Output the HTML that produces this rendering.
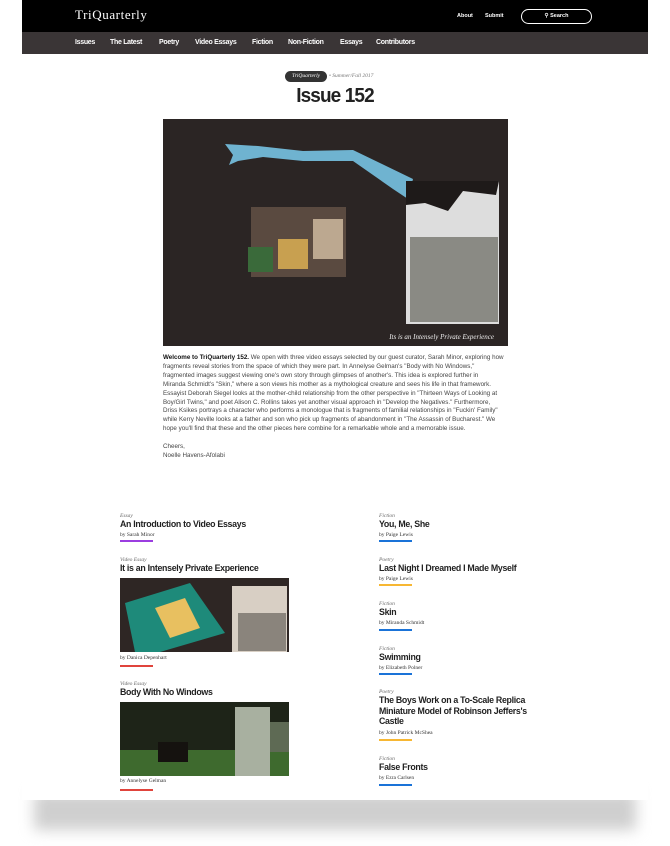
<!DOCTYPE html>
<html><head><meta charset="utf-8"><style>
*{margin:0;padding:0;box-sizing:border-box}
body{width:670px;height:846px;background:#fff;position:relative;overflow:hidden;font-family:"Liberation Sans",sans-serif}
.shadow{position:absolute;left:34px;top:792px;width:602px;height:38px;background:#cfcfcf;filter:blur(7px)}
.page{position:absolute;left:22px;top:0;width:626px;height:800px;background:#fff;overflow:hidden}
.top{position:absolute;left:0;top:0;width:626px;height:32px;background:#000}
.logo{position:absolute;left:53px;top:7px;color:#fff;font-family:"Liberation Serif",serif;font-size:13px;letter-spacing:.6px}
.tl{position:absolute;top:13px;color:#fff;font-size:5.5px;font-weight:bold}
.search{position:absolute;left:499px;top:9px;width:71px;height:15px;border:1px solid #fff;border-radius:8px;color:#fff;font-size:5.5px;font-weight:bold;text-align:center;line-height:13px}
.nav{position:absolute;left:0;top:32px;width:626px;height:22px;background:#3a3536}
.nav span{position:absolute;top:7px;color:#fff;font-size:7px;font-weight:bold;letter-spacing:-.3px}
.a{position:absolute;white-space:nowrap}
.cat{font-family:"Liberation Serif",serif;font-style:italic;font-size:5.5px;color:#666}
.tt{font-size:8.8px;font-weight:bold;color:#222;letter-spacing:-.3px;line-height:10.5px}
.by{font-family:"Liberation Serif",serif;font-size:5.5px;color:#333}
.bar{width:33px;height:2px}
p.body{position:absolute;left:141px;top:354px;width:360px;font-size:6.25px;line-height:8.9px;color:#444;white-space:nowrap}
p.body span{display:block;line-height:8.9px}
</style></head><body>
<div class="shadow"></div>
<div class="page">
<div class="top">
<div class="logo">TriQuarterly</div>
<div class="tl" style="left:435px">About</div>
<div class="tl" style="left:463px">Submit</div>
<div class="search">⚲ Search</div>
</div>
<div class="nav">
<span style="left:53px">Issues</span><span style="left:88px">The Latest</span><span style="left:137px">Poetry</span><span style="left:173px">Video Essays</span><span style="left:230px">Fiction</span><span style="left:266px">Non-Fiction</span><span style="left:318px">Essays</span><span style="left:354px">Contributors</span>
</div>
<div class="a" style="left:263px;top:71px;height:11px;width:42px;background:#333;border-radius:6px;color:#fff;font-family:'Liberation Serif',serif;font-style:italic;font-size:5.5px;text-align:center;line-height:11px">TriQuarterly</div>
<div class="a cat" style="left:307px;top:73px;color:#777">• Summer/Fall 2017</div>
<div class="a" style="left:0;width:626px;text-align:center;top:86px;font-size:19px;font-weight:bold;color:#222;letter-spacing:-.9px;transform:scaleY(1.05)">Issue 152</div>
<svg class="a" style="left:141px;top:119px" width="345" height="227" viewBox="0 0 345 227">
<rect width="345" height="227" fill="#2b2524"/>
<path d="M62 25 L95 27 L140 32 L190 31 L250 60 L245 80 L230 70 L190 42 L140 42 L100 38 L75 42 L66 46 L70 36Z" fill="#6fb3d0"/>
<rect x="243" y="62" width="93" height="143" fill="#ddd"/>
<path d="M243 62 L336 62 L333 76 L300 72 L285 92 L262 84 L243 86Z" fill="#1e1a19"/>
<rect x="247" y="118" width="88" height="85" fill="#8a8a84"/>
<rect x="88" y="88" width="95" height="70" fill="#5a4a40"/>
<rect x="115" y="120" width="30" height="30" fill="#c8a050"/>
<rect x="85" y="128" width="25" height="25" fill="#3a6a3a"/>
<rect x="150" y="100" width="30" height="40" fill="#bca890"/>
<text x="331" y="220" text-anchor="end" fill="#eee" font-family="Liberation Serif" font-style="italic" font-size="7">Its is an Intensely Private Experience</text>
</svg>
<p class="body"><span><b style="color:#111">Welcome to TriQuarterly 152.</b> We open with three video essays selected by our guest curator, Sarah Minor, exploring how</span><span>fragments reveal stories from the space of which they were part. In Annelyse Gelman's "Body with No Windows,"</span><span>fragmented images suggest viewing one's own story through glimpses of another's. This idea is explored further in</span><span>Miranda Schmidt's "Skin," where a son views his mother as a mythological creature and sees his life in that framework.</span><span>Essayist Deborah Siegel looks at the mother-child relationship from the other perspective in "Thirteen Ways of Looking at</span><span>Boy/Girl Twins," and poet Alison C. Rollins takes yet another visual approach in "Develop the Negatives." Furthermore,</span><span>Driss Ksikes portrays a character who performs a monologue that is fragments of familial relationships in "Fuckin' Family"</span><span>while Kerry Neville looks at a father and son who pick up fragments of abandonment in "The Assassin of Bucharest." We</span><span>hope you'll find that these and the other pieces here combine for a remarkable whole and a memorable issue.</span><span>&nbsp;</span><span>Cheers,</span><span>Noelle Havens-Afolabi</span></p>

<div class="a cat" style="left:98px;top:513px">Essay</div>
<div class="a tt" style="left:98px;top:519px">An Introduction to Video Essays</div>
<div class="a by" style="left:98px;top:532px">by Sarah Minor</div>
<div class="a bar" style="left:98px;top:540px;background:#9b3ee0"></div>

<div class="a cat" style="left:98px;top:557px">Video Essay</div>
<div class="a tt" style="left:98px;top:563px">It is an Intensely Private Experience</div>
<svg class="a" style="left:98px;top:578px" width="169" height="74"><rect width="169" height="74" fill="#2e2624"/><path d="M5 25 L70 5 L105 55 L40 74 L15 74Z" fill="#1e8a7a"/><path d="M35 30 L65 20 L80 50 L50 60Z" fill="#e8c060"/><rect x="112" y="8" width="55" height="66" fill="#d8cfc4"/><rect x="118" y="35" width="48" height="38" fill="#8a847c"/></svg>
<div class="a by" style="left:98px;top:655px">by Danica Depenhart</div>
<div class="a bar" style="left:98px;top:665px;background:#e0443c"></div>

<div class="a cat" style="left:98px;top:681px">Video Essay</div>
<div class="a tt" style="left:98px;top:687px">Body With No Windows</div>
<svg class="a" style="left:98px;top:702px" width="169" height="74"><rect width="169" height="74" fill="#1e2418"/><rect y="48" width="169" height="26" fill="#3e6a2e"/><rect x="115" y="5" width="35" height="69" fill="#a8b0a0"/><rect x="150" y="20" width="19" height="30" fill="#5e6a54"/><rect x="38" y="40" width="30" height="20" fill="#15120f"/></svg>
<div class="a by" style="left:98px;top:778px">by Annelyse Gelman</div>
<div class="a bar" style="left:98px;top:789px;background:#e0443c"></div>

<div class="a cat" style="left:357px;top:513px">Fiction</div>
<div class="a tt" style="left:357px;top:519px">You, Me, She</div>
<div class="a by" style="left:357px;top:532px">by Paige Lewis</div>
<div class="a bar" style="left:357px;top:540px;background:#1a73d8"></div>

<div class="a cat" style="left:357px;top:557px">Poetry</div>
<div class="a tt" style="left:357px;top:563px">Last Night I Dreamed I Made Myself</div>
<div class="a by" style="left:357px;top:576px">by Paige Lewis</div>
<div class="a bar" style="left:357px;top:584px;background:#f7b733"></div>

<div class="a cat" style="left:357px;top:601px">Fiction</div>
<div class="a tt" style="left:357px;top:607px">Skin</div>
<div class="a by" style="left:357px;top:620px">by Miranda Schmidt</div>
<div class="a bar" style="left:357px;top:629px;background:#1a73d8"></div>

<div class="a cat" style="left:357px;top:646px">Fiction</div>
<div class="a tt" style="left:357px;top:652px">Swimming</div>
<div class="a by" style="left:357px;top:665px">by Elizabeth Polner</div>
<div class="a bar" style="left:357px;top:673px;background:#1a73d8"></div>

<div class="a cat" style="left:357px;top:689px">Poetry</div>
<div class="a tt" style="left:357px;top:695px;white-space:normal;width:168px">The Boys Work on a To-Scale Replica Miniature Model of Robinson Jeffers's Castle</div>
<div class="a by" style="left:357px;top:730px">by John Patrick McShea</div>
<div class="a bar" style="left:357px;top:739px;background:#f7b733"></div>

<div class="a cat" style="left:357px;top:756px">Fiction</div>
<div class="a tt" style="left:357px;top:762px">False Fronts</div>
<div class="a by" style="left:357px;top:775px">by Ezra Carlsen</div>
<div class="a bar" style="left:357px;top:784px;background:#1a73d8"></div>
</div>
</body></html>
